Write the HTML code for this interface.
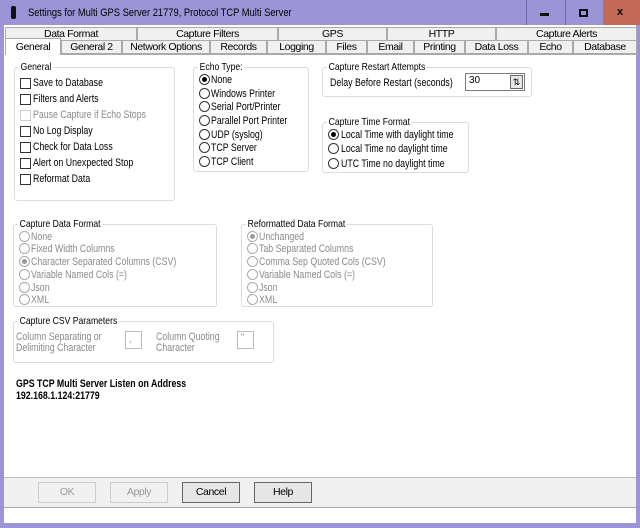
<!DOCTYPE html><html><head><style>
*{box-sizing:border-box;margin:0;padding:0}
body{width:640px;height:528px;background:#9b95d8;font-family:"Liberation Sans",sans-serif;font-size:11px;color:#000;position:relative;overflow:hidden}
.a{position:absolute;white-space:nowrap}
.t{transform:scaleX(.8);transform-origin:0 0;line-height:12px}
.tab{position:absolute;height:14px;border:1px solid #aaa;background:#f0f0f0;text-align:center;line-height:12px;font-size:10.5px;letter-spacing:-.4px}
.g{position:absolute;border:1px solid #dcdcdc;border-radius:3px}
.gl{position:absolute;top:-7px;left:4px;background:#fff;padding:0 2px;font-size:10.5px;transform:scaleX(.82);transform-origin:0 0;white-space:nowrap}
.cb{position:absolute;width:11px;height:11px;border:1px solid #333;background:#fff}
.rd{position:absolute;width:11px;height:11px;border:1px solid #333;border-radius:50%;background:#fff}
.rd.on::after{content:"";position:absolute;left:2px;top:2px;width:5px;height:5px;border-radius:50%;background:#000}
.dis{color:#8a8a8a}
.rd.dis{border-color:#aaa}
.rd.dis.on::after{background:#999}
.btn{position:absolute;top:482px;width:58px;height:21px;border:1px solid #adadad;background:#f0f0f0;text-align:center;line-height:19px;font-size:10.5px;letter-spacing:-.4px}
</style></head><body>
<div class="a" style="left:11px;top:6px;width:5px;height:13px;background:#111;border-radius:2px"></div>
<div class="a t" style="left:28px;top:7px;font-size:11px;transform:scaleX(.85)">Settings for Multi GPS Server 21779, Protocol TCP Multi Server</div>
<div class="a" style="left:526px;top:0;width:1px;height:25px;background:#6e69a8"></div>
<div class="a" style="left:565px;top:0;width:1px;height:25px;background:#6e69a8"></div>
<div class="a" style="left:540px;top:13px;width:9px;height:3px;background:#111"></div>
<div class="a" style="left:579px;top:9px;width:9px;height:8px;border:2px solid #111"></div>
<div class="a" style="left:603px;top:0;width:37px;height:25px;background:#c26a55"></div>
<div class="a" style="left:617px;top:6px;font-weight:bold;font-size:11px">x</div>
<div class="a" style="left:4px;top:25px;width:632px;height:498px;background:#fff"></div>
<div class="tab" style="left:5px;top:27px;width:132px">Data Format</div>
<div class="tab" style="left:137px;top:27px;width:141px">Capture Filters</div>
<div class="tab" style="left:278px;top:27px;width:109px">GPS</div>
<div class="tab" style="left:387px;top:27px;width:109px">HTTP</div>
<div class="tab" style="left:496px;top:27px;width:141px">Capture Alerts</div>
<div class="tab" style="left:61px;top:40px;width:61px">General 2</div>
<div class="tab" style="left:122px;top:40px;width:88px">Network Options</div>
<div class="tab" style="left:210px;top:40px;width:57px">Records</div>
<div class="tab" style="left:267px;top:40px;width:59px">Logging</div>
<div class="tab" style="left:326px;top:40px;width:41px">Files</div>
<div class="tab" style="left:367px;top:40px;width:47px">Email</div>
<div class="tab" style="left:414px;top:40px;width:51px">Printing</div>
<div class="tab" style="left:465px;top:40px;width:63px">Data Loss</div>
<div class="tab" style="left:528px;top:40px;width:45px">Echo</div>
<div class="tab" style="left:573px;top:40px;width:64px">Database</div>
<div class="tab" style="left:5px;top:38px;width:56px;height:17px;background:#fff;border-bottom:none;line-height:16px">General</div>
<div class="a" style="left:61px;top:54px;width:576px;height:1px;background:#aaa"></div>

<div class="g" style="left:14px;top:67px;width:161px;height:134px"><span class="gl">General</span></div>
<div class="cb" style="left:20px;top:78px"></div><div class="a t" style="left:33px;top:77px">Save to Database</div>
<div class="cb" style="left:20px;top:94px"></div><div class="a t" style="left:33px;top:93px">Filters and Alerts</div>
<div class="cb" style="left:20px;top:110px;border-color:#ccc"></div><div class="a t dis" style="left:33px;top:109px">Pause Capture if Echo Stops</div>
<div class="cb" style="left:20px;top:126px"></div><div class="a t" style="left:33px;top:125px">No Log Display</div>
<div class="cb" style="left:20px;top:142px"></div><div class="a t" style="left:33px;top:141px">Check for Data Loss</div>
<div class="cb" style="left:20px;top:158px"></div><div class="a t" style="left:33px;top:157px">Alert on Unexpected Stop</div>
<div class="cb" style="left:20px;top:174px"></div><div class="a t" style="left:33px;top:173px">Reformat Data</div>

<div class="g" style="left:193px;top:67px;width:116px;height:105px"><span class="gl">Echo Type:</span></div>
<div class="rd on" style="left:199px;top:74px"></div><div class="a t" style="left:211px;top:74px">None</div>
<div class="rd" style="left:199px;top:88px"></div><div class="a t" style="left:211px;top:88px">Windows Printer</div>
<div class="rd" style="left:199px;top:101px"></div><div class="a t" style="left:211px;top:101px">Serial Port/Printer</div>
<div class="rd" style="left:199px;top:115px"></div><div class="a t" style="left:211px;top:115px">Parallel Port Printer</div>
<div class="rd" style="left:199px;top:129px"></div><div class="a t" style="left:211px;top:129px">UDP (syslog)</div>
<div class="rd" style="left:199px;top:142px"></div><div class="a t" style="left:211px;top:142px">TCP Server</div>
<div class="rd" style="left:199px;top:156px"></div><div class="a t" style="left:211px;top:156px">TCP Client</div>

<div class="g" style="left:322px;top:67px;width:210px;height:30px"><span class="gl">Capture Restart Attempts</span></div>
<div class="a t" style="left:330px;top:77px">Delay Before Restart (seconds)</div>
<div class="a" style="left:465px;top:73px;width:60px;height:18px;border:1px solid #7a7a7a;padding:1px 3px;font-size:10px">30</div>
<div class="a" style="left:510px;top:75px;width:13px;height:14px;border:1px solid #666;background:#e8e8e8;font-size:9px;line-height:12px;text-align:center">⇅</div>

<div class="g" style="left:322px;top:122px;width:147px;height:51px"><span class="gl">Capture Time Format</span></div>
<div class="rd on" style="left:328px;top:129px"></div><div class="a t" style="left:341px;top:129px">Local Time with daylight time</div>
<div class="rd" style="left:328px;top:143px"></div><div class="a t" style="left:341px;top:143px">Local Time no daylight time</div>
<div class="rd" style="left:328px;top:158px"></div><div class="a t" style="left:341px;top:158px">UTC Time no daylight time</div>

<div class="g" style="left:13px;top:224px;width:204px;height:83px"><span class="gl">Capture Data Format</span></div>
<div class="rd dis" style="left:19px;top:231px"></div><div class="a t dis" style="left:31px;top:231px">None</div>
<div class="rd dis" style="left:19px;top:243px"></div><div class="a t dis" style="left:31px;top:243px">Fixed Width Columns</div>
<div class="rd dis on" style="left:19px;top:256px"></div><div class="a t dis" style="left:31px;top:256px">Character Separated Columns (CSV)</div>
<div class="rd dis" style="left:19px;top:269px"></div><div class="a t dis" style="left:31px;top:269px">Variable Named Cols (=)</div>
<div class="rd dis" style="left:19px;top:282px"></div><div class="a t dis" style="left:31px;top:282px">Json</div>
<div class="rd dis" style="left:19px;top:294px"></div><div class="a t dis" style="left:31px;top:294px">XML</div>

<div class="g" style="left:241px;top:224px;width:192px;height:83px"><span class="gl">Reformatted Data Format</span></div>
<div class="rd dis on" style="left:247px;top:231px"></div><div class="a t dis" style="left:259px;top:231px">Unchanged</div>
<div class="rd dis" style="left:247px;top:243px"></div><div class="a t dis" style="left:259px;top:243px">Tab Separated Columns</div>
<div class="rd dis" style="left:247px;top:256px"></div><div class="a t dis" style="left:259px;top:256px">Comma Sep Quoted Cols (CSV)</div>
<div class="rd dis" style="left:247px;top:269px"></div><div class="a t dis" style="left:259px;top:269px">Variable Named Cols (=)</div>
<div class="rd dis" style="left:247px;top:282px"></div><div class="a t dis" style="left:259px;top:282px">Json</div>
<div class="rd dis" style="left:247px;top:294px"></div><div class="a t dis" style="left:259px;top:294px">XML</div>

<div class="g" style="left:13px;top:321px;width:261px;height:42px"><span class="gl">Capture CSV Parameters</span></div>
<div class="a t dis" style="left:16px;top:332px;line-height:11px">Column Separating or<br>Delimiting Character</div>
<div class="a" style="left:125px;top:331px;width:17px;height:18px;border:1px solid #bbb;font-size:9px;padding:2px 3px;color:#888">,</div>
<div class="a t dis" style="left:156px;top:332px;line-height:11px">Column Quoting<br>Character</div>
<div class="a" style="left:237px;top:331px;width:17px;height:18px;border:1px solid #bbb;font-size:9px;padding:0 3px;color:#888">"</div>

<div class="a t" style="left:16px;top:378px;font-weight:bold">GPS TCP Multi Server Listen on Address</div>
<div class="a t" style="left:16px;top:390px;font-weight:bold">192.168.1.124:21779</div>

<div class="a" style="left:4px;top:477px;width:632px;height:31px;background:#f0f0f0;border-top:1px solid #bbb;border-bottom:1px solid #aaa"></div>
<div class="btn" style="left:38px;color:#999;border-color:#ccc">OK</div>
<div class="btn" style="left:110px;color:#999;border-color:#ccc">Apply</div>
<div class="btn" style="left:182px;border-color:#666;background:#e6e6e6">Cancel</div>
<div class="btn" style="left:254px;border-color:#666;background:#e6e6e6">Help</div>
</body></html>
